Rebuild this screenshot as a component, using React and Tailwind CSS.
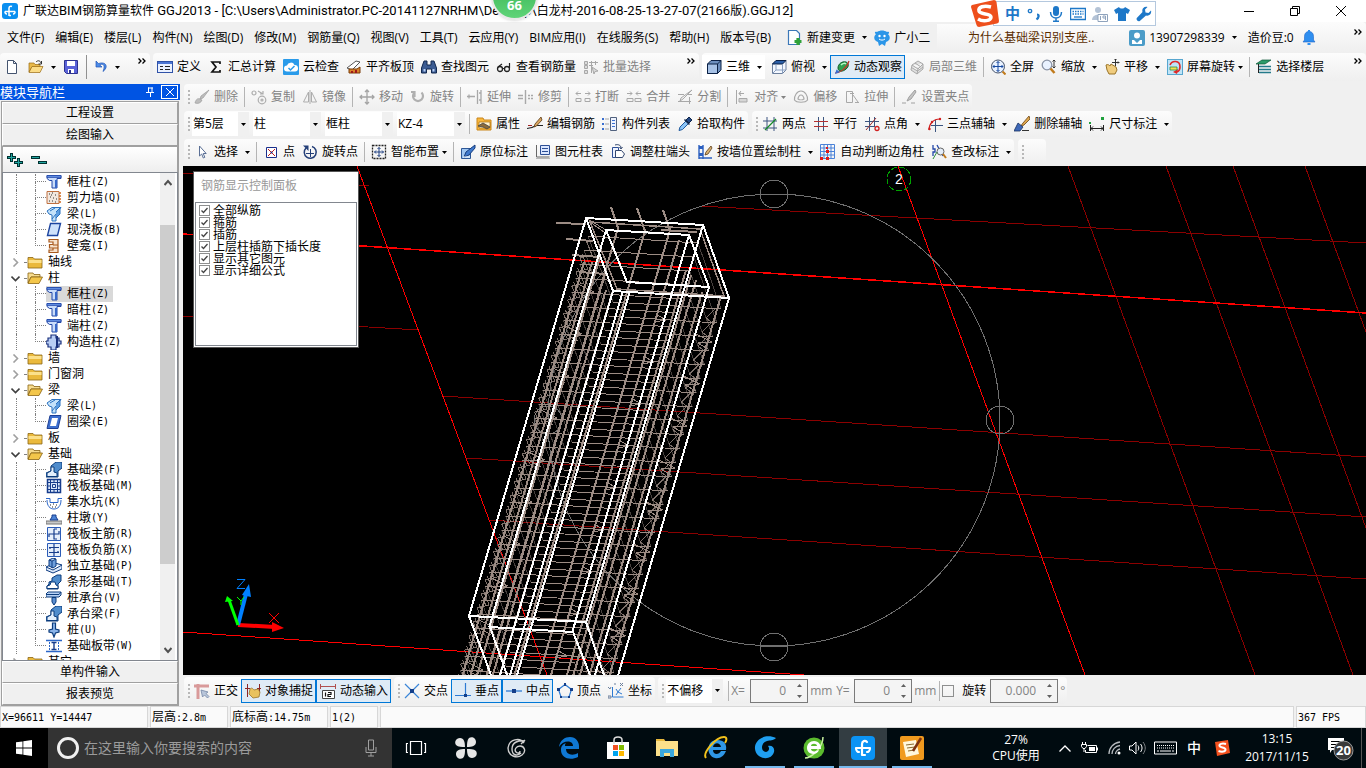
import React from 'react';

const ICONS = {
  app: (
    <>
      <rect width="16" height="16" rx="3" fill="#0a8ff0" />
      <path d="M7 13V5a2 2 0 0 1 3-1.5M3 8.500h10M3 8.500a2 2 0 0 0 2 2.500M13 8.500a2 2 0 0 1-2 2.500M7 12.500h2" stroke="#fff" strokeWidth="1.500" fill="none" />
    </>
  ),
  newFile: <path d="M3.500 1.500h6l3 3v10h-9zM9.500 1.500v3h3" fill="#fff" stroke="#44546f" />,
  open: (
    <>
      <path d="M1 13V4h5l1 1.500h5V8H4z" fill="#e8b94a" stroke="#9a6a12" strokeWidth=".7" />
      <path d="M1 13.500 4 7.500h11l-3 6z" fill="#fbdc86" stroke="#9a6a12" strokeWidth=".7" />
      <path d="M8 3c2-2 4-1.500 5 1M13.500 2v3h-3" stroke="#333" fill="none" />
    </>
  ),
  save: (
    <>
      <path d="M1.500 1.500h13v13h-11l-2-2z" fill="#5a62d8" stroke="#2c3290" />
      <path d="M4 2h8v5H4zM5 10h6v4H5z" fill="#fff" />
      <path d="M6 11h2v3H6z" fill="#2c3290" />
    </>
  ),
  undo: <path d="M2 2v6h6L5.800 6c3-2 6 0 3.200 6.500C15 8 12 2 4.500 4.500z" fill="#4c8be8" stroke="#1f55b5" strokeWidth=".7" />,
  define: (
    <>
      <rect x=".5" y="2.500" width="15" height="11" fill="#eaf1ff" stroke="#2f52a8" />
      <path d="M1 3h14v2H1z" fill="#4c76d4" />
      <path d="M3 7.500h3M3 10.500h3M8 7.500h5M8 10.500h5" stroke="#222" />
    </>
  ),
  sigma: <path d="M12 5V3H4l4 5-4 5h8v-2" fill="none" stroke="#111" strokeWidth="1.700" />,
  cloud: (
    <>
      <rect width="16" height="16" rx="1" fill="#2a9bea" />
      <path d="M4 12.500a3 3 0 0 1 0-6 4 4 0 0 1 7.500-.5A3.200 3.200 0 0 1 12 12.500z" fill="#fff" />
      <path d="m5.500 9 2 2 4-4" fill="none" stroke="#2a9bea" strokeWidth="1.500" />
    </>
  ),
  slab: (
    <>
      <path d="m1 9 9-7 4 1-8 8z" fill="#fff" stroke="#555" />
      <path d="M3 10h8l3-2v6H3z" fill="#d9822b" stroke="#7a3c08" />
      <path d="M5 12h2v2H5zM9 11h2v3H9z" fill="#a01818" />
    </>
  ),
  binoculars: (
    <>
      <path d="M3 2h3v4h4V2h3l2.500 7v5h-5v-4h-5v4h-5V9z" fill="#3b5b92" stroke="#13294f" />
      <path d="M2.500 10h2v2.500h-2zM11.500 10h2v2.500h-2z" fill="#b9d0f5" />
    </>
  ),
  glasses: (
    <>
      <circle cx="4" cy="10" r="2.500" fill="none" stroke="#222" strokeWidth="1.300" />
      <circle cx="11" cy="10" r="2.500" fill="none" stroke="#222" strokeWidth="1.300" />
      <path d="M6.500 9.500h2M2 8l4-3M13.500 9V4" stroke="#222" strokeWidth="1.200" />
    </>
  ),
  batch: <path d="M1.500 2.500h3v3h-3zM1.500 6.500h3v3h-3zM1.500 11.500h3v3h-3zM6 3.500h9M6 6.500h4M8.500 2v12M12.500 2v4M9 8l6 4-3 .5-1 2.500z" fill="#dcdcdc" stroke="#a8a8a8" />,
  cube: (
    <>
      <path d="M1.500 5 5 1.500h10V11l-3.500 3.500h-10z" fill="#6d8fbe" stroke="#0b2145" />
      <path d="M1.500 5h10v9.500h-10z" fill="#a7c2e6" stroke="#0b2145" />
      <path d="M11.500 5 15 1.500" stroke="#0b2145" />
    </>
  ),
  cubeTop: (
    <>
      <path d="M1.500 5 5 1.500h10V11l-3.500 3.500h-10z" fill="#f4f8ff" stroke="#6c7f9c" />
      <path d="M1.500 5 5 1.500h10L11.500 5z" fill="#2b5fa8" stroke="#0b2145" />
      <path d="M11.500 5v9.500M1.500 14.500 5 11h10M5 5v6" fill="none" stroke="#8aa0c0" />
    </>
  ),
  orbit: (
    <>
      <path d="M4 9c0-4 4-7 8-6 3 1 3 5 0 7-3 3-8 3-8-1z" fill="#2fa14f" stroke="#0d5a26" />
      <path d="M1 14c5 0 12-5 14-12" fill="none" stroke="#c0392b" strokeWidth="1.200" />
      <path d="M7 6c2-2 4-2 5-1" fill="none" stroke="#b8f5c4" strokeWidth="1.500" />
      <path d="m1 15 1.500-4.500L6 13z" fill="#3a6fd0" />
    </>
  ),
  partial3d: <path d="M3 6 9 2l5 3v5l-6 5-6-4zM3 6l6 4 5-5M9 10l-1 5M6 4l6 4M2.500 8.500 8.500 12l5.500-4" fill="#e0e0e0" stroke="#a8a8a8" />,
  fit: (
    <>
      <circle cx="8" cy="7.500" r="6.500" fill="#e9f2ff" stroke="#46536b" />
      <path d="M8 2.500v10M3 7.500h10M6.500 4 8 2.500 9.500 4M6.500 11 8 12.500 9.500 11M4.500 6 3 7.500 4.500 9M11.500 6 13 7.500 11.500 9" fill="none" stroke="#1749a0" />
      <path d="m12.500 12.500 3 3" stroke="#c07a1c" strokeWidth="2" />
    </>
  ),
  zoomIcon: (
    <>
      <circle cx="6" cy="6" r="4.800" fill="#e9f2ff" stroke="#8a94a6" strokeWidth="1.300" />
      <path d="m9.500 9.500 4 4.500" stroke="#c07a1c" strokeWidth="2.500" />
      <path d="M13 1v8M11.500 2.500 13 1l1.500 1.500M11.500 7.500 13 9l1.500-1.500" fill="none" stroke="#333" />
    </>
  ),
  pan: (
    <>
      <path d="M2 6c2-1 3 0 4 1l1-2 5 3 1 3-2 4H5L3 11z" fill="#f0cc7e" stroke="#9a7428" />
      <path d="M11.500 0v7M8 3.500h7M10.500 1l1-1 1 1M14 2.500l1 1-1 1" stroke="#333" fill="none" />
    </>
  ),
  screenRotate: (
    <>
      <rect x=".5" y=".5" width="15" height="15" fill="#bfe4f7" stroke="#57a6cf" />
      <path d="M3 6c2-5 10-5 10 2 0 3-1 4-3 5" fill="none" stroke="#e02828" strokeWidth="1.600" />
      <path d="m11 10-1 5-4-2z" fill="#e02828" />
      <path d="M3 8h7v3H3z" fill="#f4e04e" stroke="#2d8d47" strokeWidth=".8" />
    </>
  ),
  floors: (
    <>
      <path d="M0 5 6 1h9l-6 4z" fill="#2d9b6a" stroke="#0d5638" strokeWidth=".7" />
      <path d="M3 7.500h12M3 10.500h12M3 13.500h12" stroke="#247a8a" strokeWidth="1.500" />
      <path d="M2.500 5v9" stroke="#222" />
    </>
  ),
  brushG: <path d="m15 1-6 8-3 1 1-3zM1 14c1-4 3-5 5-4l2 1c-1 3-4 4-7 3z" fill="#bdbdbd" stroke="#9c9c9c" strokeWidth=".7" />,
  copyG: (
    <g fill="none" stroke="#adadad" strokeWidth="1.200">
      <circle cx="3" cy="4" r="2" />
      <circle cx="11" cy="11" r="3.800" />
      <circle cx="11" cy="11" r="1" />
      <path d="m7 2 5 3M12 2v3H9" />
    </g>
  ),
  mirrorG: <path d="M6.500 3v10h-5zM9.500 3v10h5zM8 1v14" fill="none" stroke="#adadad" />,
  moveG: <path d="M8 1v14M1 8h14M6 3l2-2 2 2M6 13l2 2 2-2M3 6 1 8l2 2M13 6l2 2-2 2" fill="none" stroke="#a4a4a4" strokeWidth="1.300" />,
  rotateG: <path d="M4.500 3.500a5 5 0 1 0 7 0M4.500 8V3H1" fill="none" stroke="#b0b0b0" strokeWidth="2.200" />,
  extendG: <path d="M0 7.500h8M2 5.500v4M10.500 1v14M14 1v14M12 4h2M12 11h2" fill="none" stroke="#a8a8a8" strokeWidth="1.300" />,
  trimG: <path d="M0 6.500h5M0 9.500h5M7.500 1v14M10 6.500h2M13 6.500h2M10 9.500h2M13 9.500h2" fill="none" stroke="#a8a8a8" strokeWidth="1.400" />,
  breakG: <path d="M1 4.500h5M3 2.500 1 4.500l2 2M15 4.500h-5M13 2.500l2 2-2 2M1 9.500h5v3H1zM15 9.500h-5v3h5z" fill="none" stroke="#a8a8a8" />,
  joinG: <path d="M1 4.500h5M4 2.500l2 2-2 2M15 4.500h-5M12 2.500l-2 2 2 2M1 9.500h6v3H1zM15 9.500H9v3h6z" fill="none" stroke="#a8a8a8" />,
  splitG: <path d="M1 5.500h6M1 12.500h13M12.500 8v7M15 1 6 10l-3 2 1-3zM10 5.500h5" fill="none" stroke="#a8a8a8" />,
  alignG: <path d="M2.500 1v14M5 4.500h5M5 9.500h8V13H5zM7 2 5 4.500 7 7" fill="#d6d6d6" stroke="#a8a8a8" />,
  offsetG: <path d="M1.500 11C1 7 4 2 8 2s7 5 6.500 9c-2 3-11 3-13 0zM5 10c0-2 1.500-4 3-4s3 2 3 4c-1.500 1-4.500 1-6 0z" fill="none" stroke="#a8a8a8" strokeWidth="1.200" />,
  stretchG: <path d="M2.500 2.500h6v11h-6zM9 6l5 7M11 13.500h4M6 4.500h4" fill="none" stroke="#a8a8a8" />,
  gripG: <path d="M14 1 8 8l-2 4 4-2 5-7zM1 14h4M10 14h4" fill="#c4c4c4" stroke="#a0a0a0" />,
  props: (
    <>
      <path d="M1 2h6l1 2h7v10H1z" fill="#f9b83e" stroke="#c9851a" />
      <path d="M3 6h11v6H3z" fill="#fff3d2" stroke="#a36b10" strokeWidth=".7" />
      <path d="m2 10 5-3 7 4-3 2-4-2z" fill="#8a6a3a" stroke="#444" strokeWidth=".8" />
    </>
  ),
  editBar: (
    <>
      <path d="M0 12.500c4 0 6-1 9-3h7" fill="none" stroke="#222" strokeWidth="1.200" />
      <path d="m14 1-6 7-1 3 2.500-1L15 4z" fill="#d8a560" stroke="#5a3b16" strokeWidth=".8" />
      <path d="M1 9.500h4" stroke="#a02020" />
    </>
  ),
  list: (
    <>
      <path d="M0 2h2v2H0zM0 7h2v2H0zM0 12h2v2H0z" fill="#3a6fd0" />
      <path d="M3.500 3h4M3.500 8h4M3.500 13h4" stroke="#555" strokeDasharray="1 1" />
      <path d="M8.500 1.500h6v13h-6z" fill="#eef3ff" stroke="#51617e" />
      <path d="M10 4.500h3M10 7.500h3M10 10.500h3" stroke="#3a6fd0" />
    </>
  ),
  dropper: (
    <>
      <path d="m9 4 3-3 3 3-3 3z" fill="#244a86" stroke="#10264b" />
      <path d="m9 5 2.500 2.500-6 6-3.500 1 1-3.500z" fill="#8bc4f7" stroke="#205a9e" />
      <path d="m7.500 3.500 5 5" stroke="#10264b" strokeWidth="1.500" />
    </>
  ),
  axis2: <><path d="M5 1v14M12 1v14M1 5h14M1 12h14" stroke="#3c5580" /><path d="M3 14 14 3" stroke="#168a28" strokeWidth="1.300" /></>,
  axisPar: <><path d="M5.500 1v14M10.500 1v14" stroke="#3c5580" /><path d="M1 5.500h14M1 10.500h14" stroke="#b33030" /></>,
  axisAng: <><path d="M5.500 1v14M10.500 1v10M1 5.500h14M1 10.500h10" stroke="#3c5580" /><path d="M2 14 12 2" stroke="#a03030" /><circle cx="13" cy="12.500" r="2" fill="none" stroke="#d02020" strokeWidth="1.300" /></>,
  axis3: <><path d="M8.500 4v12M4 9.500h12" stroke="#3c5580" /><path d="M2 14c0-6 4-11 11-11" fill="none" stroke="#d02020" strokeWidth="1.200" /><circle cx="2.500" cy="13" r="1.200" fill="#d02020" /><circle cx="5" cy="6" r="1.200" fill="#d02020" /><circle cx="13" cy="3" r="1.200" fill="#d02020" /></>,
  axisDel: (
    <>
      <path d="m15 0-6 7-3 4 4-2 6-6z" fill="#e0a84e" stroke="#6a4312" strokeWidth=".8" />
      <path d="m4 7 5 4-3 4H0z" fill="#3e68b8" stroke="#17305f" strokeWidth=".8" />
      <path d="M8 14.500h7" stroke="#333" />
    </>
  ),
  dim: <><path d="M1.500 9v6M14.500 9v6M2 12.500h12M4 10.500l-2 2 2 2M12 10.500l2 2-2 2" fill="none" stroke="#222" /><path d="M0 6h2v2H0zM12 1h3v3h-3z" fill="#1fa03c" /></>,
  pointer: <path d="M5.500 2v10l2.200-2 1.600 4 1.500-.7-1.600-3.800h3z" fill="#fff" stroke="#5a6f95" />,
  point: <><path d="M3.500 3.500h10v10h-10z" fill="#fff" stroke="#1a2f8c" /><path d="m5 5 7 7M12 5l-7 7" stroke="#c02020" /><circle cx="8.500" cy="8.500" r="1" fill="#1a2f8c" /></>,
  rotPoint: <><path d="M4 4a6 6 0 1 0 6-1.500" fill="none" stroke="#243f78" strokeWidth="1.500" /><path d="M1 1.500h5.500V7z" fill="#243f78" /><path d="M8.500 5v8M4 9.500h8" stroke="#243f78" /></>,
  smart: <><path d="M1.500 1.500h13v13h-13z" fill="none" stroke="#222" strokeDasharray="2 1" strokeWidth="1.300" /><path d="M8 3.500v9M3.500 8h9M6.500 5 8 3.500 9.500 5M6.500 11 8 12.500 9.500 11M5 6.500 3.500 8 5 9.500M11 6.500 12.500 8 11 9.500" stroke="#1f3f80" fill="none" /></>,
  inplace: <><path d="M1.500 4.500h9v10h-9z" fill="#9fc6f2" stroke="#2d5796" /><path d="m15 1-9 7-2 5 5-2 6-7z" fill="#3f79cd" stroke="#173d7d" /><path d="M3 13h7" stroke="#fff" /></>,
  colTable: <><path d="M1.500 1v12h13" fill="none" stroke="#666" /><path d="M5.500 1.500h9v9h-9z" fill="#dbe7ff" stroke="#2d4f96" /><path d="M7 4.500h6M7 7.500h6" stroke="#2d4f96" /><path d="M1 14.500h14" stroke="#b8b8b8" /></>,
  adjust: <><path d="M2.500 3.500h6v10h-6z" fill="#eef3ff" stroke="#2d4f96" /><path d="M5.500 6.500v7h7l2-3.500-3-3.500z" fill="#fff" stroke="#31466e" /><path d="M5 1c3-1 6 0 6 3M9.500 3l1.500 2 1.500-2" fill="none" stroke="#31466e" /></>,
  wallCol: <><path d="M2 1v14M6 1v14M2 14h13" stroke="#2b5fc0" strokeWidth="1.400" /><path d="M2 2h4v3H2zM2 9h4v3H2z" fill="#2b5fc0" /><path d="m14 2-5 6-1 3 3-1 4-6z" fill="#d9b273" stroke="#5a3b16" strokeWidth=".8" /></>,
  autoCol: <><path d="M.5.500h14v14H.5zM4 0v15M7.500 0v15M11 0v15M0 4h15M0 7.500h15M0 11h15" fill="none" stroke="#4a82d8" /><path d="M6 3h2v2H6zM6 6h3v3H6zM0 13h3v3H0zM6 13h3v3H6z" fill="#e01818" /></>,
  check: <><path d="M2 1v4h2v3H2v4M6 1 12 12" fill="none" stroke="#2447a8" strokeWidth="1.300" /><circle cx="9.500" cy="7.500" r="3.500" fill="#e4edf8" stroke="#666" /><path d="m12 10 3 4" stroke="#c07a1c" strokeWidth="2" /><path d="M2 15 6 8" stroke="#2f8f3a" /></>,
  ortho: <><path d="M0 3h15M4 1v15" stroke="#d99a9a" strokeWidth="3" /><path d="m7 7 1.500 7 2-2 3 3 1.500-1.500-3-3 2-1.500z" fill="#b9c6da" stroke="#7587a6" strokeWidth=".8" /></>,
  snap: <><path d="M2.500 1v13M14.500 1v9M0 5.500h5M12 5.500h4" stroke="#8b2727" /><path d="M5 6c2-2 3 0 4 1l4-1 2 3-1 5-6 1-4-4z" fill="#e9c25e" stroke="#9a7428" strokeWidth=".8" /></>,
  dyn: <><path d="M0 3.500h16M.5 1v5M15.500 1v5" stroke="#b05050" /><path d="M2.500 7.500h12v8h-12z" fill="#fff" stroke="#444" /><path d="M5.500 9.500v4M8 9.500h3v2H8v2h3" fill="none" stroke="#111" strokeWidth="1.200" /></>,
  cross: <><path d="m1 1 14 14M15 1 1 15" stroke="#3b86d8" strokeWidth="1.200" /><path d="M6 6h4v4H6z" fill="#143f8a" /></>,
  perp: <><path d="M0 12.500h16M10.500 0v12" stroke="#2d7ad2" strokeWidth="1.200" /><path d="M9 11h3v3H9z" fill="#143f8a" /></>,
  mid: <><path d="M0 8h16" stroke="#2d7ad2" strokeWidth="1.300" /><path d="M6 6h4v4H6z" fill="#143f8a" /></>,
  vertex: <><path d="M8 1.500 14.500 6.500 12 14H4L1.500 6.500z" fill="none" stroke="#2d7ad2" strokeWidth="1.200" /><path d="M7 0h2v3H7zM0 5h3v3H0zM13 5h3v3h-3zM3 13h2v2H3zM11 13h2v2h-2z" fill="#143f8a" /></>,
  coord: <><path d="M4.500 4v10h11M8 6l2 3 3-4M8 12l2-3 4 2" fill="none" stroke="#2d7ad2" /><path d="M0 4l2 2 1-2M0 13h3v2H0zM6 1h2M12 0l3 3M15 0l-3 3" stroke="#6b7f9c" fill="none" /></>,
  change: <><path d="M1.500.5h8l3 3v11h-11z" fill="#fff" stroke="#3c78b8" strokeWidth="1.200" /><path d="M11 8v7M7.500 11.500h7" stroke="#2fa238" strokeWidth="3.200" /></>,
  mascot: <><path d="M2 4c-2-1-1-3 1-2 3-2 7-2 10 0 2-1 3 1 1 2 3 3 2 7-2 8l-1 4-3-2-3 2-1-4C0 11-1 7 2 4z" fill="#2b96e8" /><circle cx="5.500" cy="6" r="1.200" fill="#fff" /><circle cx="10.500" cy="6" r="1.200" fill="#fff" /><path d="M5 9c2 1.500 4 1.500 6 0" fill="none" stroke="#fff" /></>,
  avatar: <><rect width="16" height="16" rx="2" fill="#4b9cc8" /><circle cx="8" cy="5.500" r="3" fill="#fff" /><path d="M3 14V10h2l3 3 3-3h2v4z" fill="#fff" /></>,
  bell: <><path d="M8 1.500c3 0 4.500 2 4.500 5V10l1.500 2H2l1.500-2V6.500c0-3 1.500-5 4.500-5z" fill="#2f8ff0" stroke="#1b63c8" strokeWidth=".6" /><path d="M6.500 13h3v2h-3zM7 0h2v2H7z" fill="#2f8ff0" /></>,
  // tree
  folder: <><path d="M1 3.500h5l1.500 1.500H15v9H1z" fill="#eab93c" stroke="#8a6414" strokeWidth=".8" /><path d="M1.500 6H14.500V9H1.500z" fill="#fbe08a" /></>,
  folderOpen: <><path d="M1 13V3h5l1 1.500h6V7H4z" fill="#f7dc8e" stroke="#8a6414" strokeWidth=".8" /><path d="M1 13.500 4 7h11.500L12 13.500z" fill="#f3c64a" stroke="#8a6414" strokeWidth=".8" /></>,
  column: <><path d="M1 1.500h14v3H11v9.500H6V6.500H3.500L1 4.500z" fill="#c9dcfa" stroke="#2146a8" /><path d="M1 1.500h14v2H1z" fill="#5f8ce0" stroke="#2146a8" strokeWidth=".7" /><path d="M9 6v8h2V6z" fill="#3767c8" /></>,
  wall: <><path d="M1 1.500h12v12H1z" fill="#f1e7de" stroke="#c07040" /><path d="M3 4h1M6 3h1M9 5h1M4 7h1M7 8h1M10 9h1M3 11h1M6 11h1M9 12h1M5 5h1" stroke="#333" /><path d="M13 3h2M13 6h2M13 9h2M13 12h2" stroke="#d06a20" strokeWidth="1.400" /></>,
  beam: <><path d="M1 5 6 1.500h9L12 5v2l-2 2v6H6V9L3 8z" fill="#c4e2fa" stroke="#2a72c0" /><path d="m10 6 4-4v6l-4 4M4 5l5-3M6 13l4-5" fill="#5d9de0" stroke="#2a72c0" /></>,
  slabI: <path d="M4.500 1.500h10l-3 12h-10z" fill="#cfe2fb" stroke="#1d45a0" strokeWidth="1.400" />,
  ring: <><path d="M4 1.500h11l-3 13H1z" fill="#3d6fcf" stroke="#1d3f94" /><path d="M6 4h6l-2 8H4z" fill="#fff" /></>,
  niche: <path d="M3 1.500h9v13H3v-2.500h4V10H3.500V6.500H7V4H3zM7 7h5M7 10h5" fill="#f7e2cc" stroke="#a8591c" strokeWidth="1.200" />,
  consCol: <><path d="M5 1h5v3h3v3h2v3h-2v3h-3v3H5v-3H2v-3H0V7h2V4h3z" fill="#b8cdf4" stroke="#19307c" strokeWidth="1.200" /><path d="M10 2h2v12h-2z" fill="#19307c" /></>,
  fBeam: <><path d="M0 15v-4l5-2V4l5-4h6v6l-4 3v6z" fill="#4f8ccc" stroke="#0c3c7c" /><path d="M5 9V5h3v5l3 1v3.500H1V11z" fill="#e3effc" stroke="#0c3c7c" /></>,
  raft: <><path d="M1.500 1.500h13v13h-13z" fill="#dbe8fb" stroke="#163c8c" strokeWidth="1.500" /><path d="M4.500 1v14M11.500 1v14M1 4.500h14M1 11.500h14M6.500 6.500h3v3h-3zM8 1v4M8 11v4M1 8h3M12 8h3" stroke="#163c8c" fill="none" /></>,
  pit: <><path d="M0 4.500h4v4h8v-4h4M1 6c0 6 3 9 7 9s7-3 7-9" fill="none" stroke="#2b66c8" /><path d="M4 11h1M7 10h1M10 11h1M6 13h1M9 13h1" stroke="#222" /></>,
  pier: <><path d="M0 11h16v3H0z" fill="#c8c8c8" stroke="#777" /><path d="m4 10 2-3V5h4v2l2 3z" fill="#4c84d8" stroke="#163c8c" /></>,
  mainBar: <><path d="M1.500 1.500h13v13h-13z" fill="#e6effc" stroke="#2b5cb8" /><path d="M8 3v10h3M3 11V8h10V5M8 3h3" fill="none" stroke="#163c8c" strokeWidth="1.200" /></>,
  negBar: <><path d="M1.500 1.500h13v13h-13z" fill="#e6effc" stroke="#2b5cb8" /><path d="M8 2v12M3 5.500h10M3 10.500h10M4 5v2M12 9v2" fill="none" stroke="#163c8c" strokeWidth="1.200" /></>,
  isoF: <><path d="M0 9 9 5l7 2v4l-9 4-7-3zM0 9l7 3 9-5" fill="#dce9fb" stroke="#0f3c80" /><path d="M3 2 7 0l3 1v7L7 10 3 8zM6 3v7M3 2l3 1 4-2" fill="#6f9fdc" stroke="#0f3c80" /></>,
  stripF: <><path d="M1 15v-3l2-2V8l3-1V4l5-3h4v6l-3 3v5z" fill="#4f8ccc" stroke="#0c3c7c" /><path d="M1 14.500V12l3-1 1-3h4l1 3 2 1v2.500z" fill="#fff" stroke="#0c3c7c" /></>,
  pileCap: <><path d="M0 4 2 2h13v3l-2 2H0zM0 4.500h13M13 4.500 15 2" fill="#b9d3f6" stroke="#0c3c7c" /><path d="M6 7.500h4V12l-2 3-2-3z" fill="#5d8fd0" stroke="#0c3c7c" /></>,
  pile: <path d="M6.500 1h3v6L13 8v2l-3.500 1L8 15l-1.500-4L3 10V8l3.500-1z" fill="#8ab4ea" stroke="#0c3c7c" strokeWidth="1.200" />,
  band: <><path d="M0 2.500h16M0 13.500h16" stroke="#2b66c8" strokeWidth="1.400" /><path d="M3.500 4v8M12.500 4v8" stroke="#2b66c8" strokeDasharray="2 1" /><path d="M8 4v8M5.500 4.500h5M5.500 11.500h5" stroke="#163c8c" strokeWidth="1.400" /></>,
};

const Icon = ({ name, className = 'h-4 w-4' }) => (
  <svg viewBox="0 0 16 16" className={`${className} shrink-0`} aria-hidden="true">
    {ICONS[name]}
  </svg>
);

const Caret = ({ className = '' }) => (
  <span className={`flex w-[11px] shrink-0 items-center justify-center ${className}`}>
    <svg viewBox="0 0 5 3" className="h-[3px] w-[5px]" aria-hidden="true">
      <path d="M0 0h5L2.500 3z" fill="currentColor" />
    </svg>
  </span>
);

// caret: "split" leaves room before the arrow, "inline" puts it against the label
const Tool = ({ icon, label, caret, active, disabled }) => {
  const tone = disabled ? 'text-[#838383]' : 'text-black';
  const frame = active ? 'border border-[#0078d7] bg-[#dfebf6] pl-[3px] pr-0.5' : caret ? 'pl-1' : 'pl-1 pr-[3px]';
  return (
    <button type="button" disabled={disabled} className={`flex h-6 shrink-0 items-center gap-1 whitespace-nowrap ${frame} ${tone}`}>
      {icon && <Icon name={icon} />}
      {label}
      {caret === 'split' && <Caret />}
      {caret === 'inline' && <Caret className="-ml-1" />}
    </button>
  );
};

const Sep = () => <span className="mr-0.5 ml-[3px] h-5 w-px shrink-0 bg-[#b4b4b4]" />;

const Grip = () => (
  <span className="ml-1 flex shrink-0 flex-col gap-0.5">
    {[0, 1, 2, 3].map((n) => (
      <span key={n} className="h-0.5 w-0.5 bg-[#b8b8b8]" />
    ))}
  </span>
);

const Band = ({ children, className = '' }) => (
  <div className={`flex h-full shrink-0 items-center rounded-sm bg-linear-to-b from-[#fcfcfc] to-[#efefef] ${className}`}>
    {children}
  </div>
);

const Tools = ({ items }) =>
  items.map((item, i) => (item === '|' ? <Sep key={i} /> : <Tool key={i} {...item} />));

const Chevrons = () => (
  <button type="button" aria-label="更多" className="h-6 shrink-0 px-1 text-black">
    <svg viewBox="0 0 8 6" className="mb-2 h-[6px] w-2" aria-hidden="true">
      <path d="m.5.500 2.500 2.500L.5 5.500M4.500.5 7 3 4.500 5.500" fill="none" stroke="currentColor" strokeWidth="1.300" />
    </svg>
  </button>
);

const Combo = ({ label, value, className }) => (
  <div className={`flex h-6 shrink-0 bg-white ${className}`}>
    <select aria-label={label} className="min-w-0 flex-1 appearance-none bg-transparent pl-px text-black outline-none">
      <option>{value}</option>
    </select>
    <Caret className="bg-[#f0f0f0] text-black" />
  </div>
);

const MENUS = ['文件(F)', '编辑(E)', '楼层(L)', '构件(N)', '绘图(D)', '修改(M)', '钢筋量(Q)', '视图(V)', '工具(T)', '云应用(Y)', 'BIM应用(I)', '在线服务(S)', '帮助(H)', '版本号(B)'];

const TOOLS_MAIN = [
  { icon: 'define', label: '定义' },
  { icon: 'sigma', label: '汇总计算' },
  { icon: 'cloud', label: '云检查' },
  { icon: 'slab', label: '平齐板顶' },
  { icon: 'binoculars', label: '查找图元' },
  { icon: 'glasses', label: '查看钢筋量' },
  { icon: 'batch', label: '批量选择', disabled: true },
];

const TOOLS_VIEW = [
  { icon: 'cubeTop', label: '俯视', caret: 'split' },
  { icon: 'orbit', label: '动态观察', active: true },
  { icon: 'partial3d', label: '局部三维', disabled: true },
  '|',
  { icon: 'fit', label: '全屏' },
  { icon: 'zoomIcon', label: '缩放', caret: 'split' },
  { icon: 'pan', label: '平移', caret: 'split' },
  { icon: 'screenRotate', label: '屏幕旋转', caret: 'inline' },
  '|',
  { icon: 'floors', label: '选择楼层' },
];

const TOOLS_EDIT = [
  { icon: 'brushG', label: '删除', disabled: true },
  '|',
  { icon: 'copyG', label: '复制', disabled: true },
  { icon: 'mirrorG', label: '镜像', disabled: true },
  '|',
  { icon: 'moveG', label: '移动', disabled: true },
  { icon: 'rotateG', label: '旋转', disabled: true },
  '|',
  { icon: 'extendG', label: '延伸', disabled: true },
  { icon: 'trimG', label: '修剪', disabled: true },
  '|',
  { icon: 'breakG', label: '打断', disabled: true },
  { icon: 'joinG', label: '合并', disabled: true },
  { icon: 'splitG', label: '分割', disabled: true },
  '|',
  { icon: 'alignG', label: '对齐', caret: 'inline', disabled: true },
  { icon: 'offsetG', label: '偏移', disabled: true },
  { icon: 'stretchG', label: '拉伸', disabled: true },
  '|',
  { icon: 'gripG', label: '设置夹点', disabled: true },
];

const TOOLS_COMP = [
  { icon: 'props', label: '属性' },
  { icon: 'editBar', label: '编辑钢筋' },
  { icon: 'list', label: '构件列表' },
  { icon: 'dropper', label: '拾取构件' },
];

const TOOLS_AXIS = [
  { icon: 'axis2', label: '两点' },
  { icon: 'axisPar', label: '平行' },
  { icon: 'axisAng', label: '点角', caret: 'split' },
  { icon: 'axis3', label: '三点辅轴', caret: 'split' },
  { icon: 'axisDel', label: '删除辅轴' },
  { icon: 'dim', label: '尺寸标注', caret: 'split' },
];

const TOOLS_DRAW = [
  { icon: 'pointer', label: '选择', caret: 'split' },
  '|',
  { icon: 'point', label: '点' },
  { icon: 'rotPoint', label: '旋转点' },
  '|',
  { icon: 'smart', label: '智能布置', caret: 'inline' },
  '|',
  { icon: 'inplace', label: '原位标注' },
  { icon: 'colTable', label: '图元柱表' },
  { icon: 'adjust', label: '调整柱端头' },
  { icon: 'wallCol', label: '按墙位置绘制柱', caret: 'split' },
  { icon: 'autoCol', label: '自动判断边角柱' },
  { icon: 'check', label: '查改标注', caret: 'split' },
];

const TREE = [
  { icon: 'column', name: '框柱', key: 'Z' },
  { icon: 'wall', name: '剪力墙', key: 'Q' },
  { icon: 'beam', name: '梁', key: 'L' },
  { icon: 'slabI', name: '现浇板', key: 'B' },
  { icon: 'niche', name: '壁龛', key: 'I', last: true },
  { folder: true, name: '轴线' },
  { folder: true, open: true, name: '柱' },
  { icon: 'column', name: '框柱', key: 'Z', selected: true },
  { icon: 'column', name: '暗柱', key: 'Z' },
  { icon: 'column', name: '端柱', key: 'Z' },
  { icon: 'consCol', name: '构造柱', key: 'Z', last: true },
  { folder: true, name: '墙' },
  { folder: true, name: '门窗洞' },
  { folder: true, open: true, name: '梁' },
  { icon: 'beam', name: '梁', key: 'L' },
  { icon: 'ring', name: '圈梁', key: 'E', last: true },
  { folder: true, name: '板' },
  { folder: true, open: true, name: '基础' },
  { icon: 'fBeam', name: '基础梁', key: 'F' },
  { icon: 'raft', name: '筏板基础', key: 'M' },
  { icon: 'pit', name: '集水坑', key: 'K' },
  { icon: 'pier', name: '柱墩', key: 'Y' },
  { icon: 'mainBar', name: '筏板主筋', key: 'R' },
  { icon: 'negBar', name: '筏板负筋', key: 'X' },
  { icon: 'isoF', name: '独立基础', key: 'P' },
  { icon: 'stripF', name: '条形基础', key: 'T' },
  { icon: 'pileCap', name: '桩承台', key: 'V' },
  { icon: 'fBeam', name: '承台梁', key: 'F' },
  { icon: 'pile', name: '桩', key: 'U' },
  { icon: 'band', name: '基础板带', key: 'W', last: true },
  { folder: true, name: '其它' },
];

const TreeRow = ({ item }) => {
  if (item.folder) {
    return (
      <li className="flex h-4 shrink-0 items-center">
        <svg viewBox="0 0 9 9" className="ml-2 h-[9px] w-[9px]" aria-hidden="true">
          <path d={item.open ? 'M.5 2.500l4 4 4-4' : 'M2.500.5l4 4-4 4'} fill="none" stroke={item.open ? '#404040' : '#a0a0a0'} strokeWidth="1.600" />
        </svg>
        <span className="mr-px ml-1 w-0.5 border-t border-dotted border-[#808080]" />
        <Icon name={item.open ? 'folderOpen' : 'folder'} />
        <span className="ml-[5px]">{item.name}</span>
      </li>
    );
  }
  return (
    <li className="flex h-4 shrink-0 items-center">
      <span className="ml-[13px] h-4 w-[19px] border-l border-dotted border-[#808080]" />
      <span className="flex h-4 w-[11px] flex-col">
        <span className="h-2 border-b border-l border-dotted border-[#808080]" />
        {!item.last && <span className="h-2 border-l border-dotted border-[#808080]" />}
      </span>
      <span className={`flex h-4 items-center pr-1 ${item.selected ? 'bg-[#d9d9d9]' : ''}`}>
        <Icon name={item.icon} />
        <span className="ml-[5px]">{item.name}</span>
        <span className="font-['DejaVu_Sans_Mono',monospace] text-[10px]">({item.key})</span>
      </span>
    </li>
  );
};

const NavButton = ({ children }) => (
  <button type="button" className="h-[22px] shrink-0 border border-t-white border-r-[#a0a0a0] border-b-[#a0a0a0] border-l-white bg-[#f0f0f0] text-center leading-5">
    {children}
  </button>
);

const Sidebar = () => (
  <aside className="mr-[3px] flex w-[180px] shrink-0 flex-col bg-[#f0f0f0]">
    <div className="flex h-4 shrink-0 items-center bg-[#0054e3] text-white">
      <h2 className="text-[13px] leading-4">模块导航栏</h2>
      <button type="button" aria-label="固定" className="ml-auto flex h-4 w-4 items-center justify-center">
        <svg viewBox="0 0 9 10" className="h-[10px] w-[9px]"><path d="M2.500.5v5M6 .5v5M2 1h5M0 5.500h8M4.500 6v4" stroke="#fff" fill="none" /></svg>
      </button>
      <button type="button" aria-label="关闭" className="mr-0.5 ml-[3px] flex h-[14px] w-[17px] items-center justify-center border border-white">
        <svg viewBox="0 0 8 8" className="h-2 w-2"><path d="m0 0 8 8M8 0 0 8" stroke="#fff" /></svg>
      </button>
    </div>
    <div className="mx-px mt-px flex min-h-0 flex-1 flex-col border border-[#a0a0a0]">
      <NavButton>工程设置</NavButton>
      <NavButton>绘图输入</NavButton>
      <div className="flex h-[26px] shrink-0 items-center gap-2 border-x border-t border-[#a0a0a0] bg-linear-to-b from-white to-[#eeeeee] pl-1">
        <button type="button" aria-label="全部展开">
          <svg viewBox="0 0 16 16" className="h-4 w-4" shapeRendering="crispEdges"><path d="M3 1h3v3h3v3H6v3H3V7H0V4h3zM10 6h3v3h3v3h-3v3h-3v-3H7V9h3z" fill="#003030" /><path d="M4 2h1v3h3v1H5v3H4V6H1V5h3zM11 7h1v3h3v1h-3v3h-1v-3H8v-1h3z" fill="#1fa5a0" /></svg>
        </button>
        <button type="button" aria-label="全部折叠">
          <svg viewBox="0 0 16 16" className="h-4 w-4" shapeRendering="crispEdges"><path d="M0 4h9v3H0zM7 9h9v3H7z" fill="#003030" /><path d="M1 5h7v1H1zM8 10h7v1H8z" fill="#1fa5a0" /></svg>
        </button>
      </div>
      <div className="flex min-h-0 flex-1 basis-0 border border-[#82878f] bg-white">
        <ul className="flex min-w-0 flex-1 flex-col overflow-hidden pt-px whitespace-nowrap">
          {TREE.map((item, i) => <TreeRow key={i} item={item} />)}
        </ul>
        <div className="mr-0.5 flex w-[15px] shrink-0 flex-col items-center bg-[#f0f0f0]">
          <svg viewBox="0 0 8 8" className="mt-1.5 h-2 w-2"><path d="m.5 6 3.500-4L7.500 6" fill="none" stroke="#505050" strokeWidth="2" /></svg>
          <span className="mt-[38px] w-full flex-1 bg-[#cdcdcd]" />
          <svg viewBox="0 0 8 8" className="mt-[82px] mb-1.5 h-2 w-2"><path d="m.5 2 3.500 4 3.500-4" fill="none" stroke="#505050" strokeWidth="2" /></svg>
        </div>
      </div>
      <NavButton>单构件输入</NavButton>
      <NavButton>报表预览</NavButton>
    </div>
  </aside>
);

// All long edges of the column run in the same direction on screen
const LEAN = -0.294;
const along = (x, y, toY) => x + (toY - y) * LEAN;

const EDGES = [[606, 230, 627], [613, 291, 690], [623, 291, 690], [630, 291, 690], [689, 235, 632], [703, 225, 622], [709, 287, 690], [729, 298, 690], [586, 218, 616]];
const BARS = [[584, 262], [592, 262], [600, 257], [605, 274], [606, 290], [613, 290], [618, 228], [645, 231], [670, 230], [679, 240], [686, 270], [691, 275], [696, 280], [702, 292], [721, 296]];
const STUBS = ['M556 223l30 1', 'M566 239l27 2', 'M572 255l28 2', 'M579 272l26 2', 'M611 207l7 21', 'M637 208l8 23', 'M663 210l7 20', 'M661 230l36 2'];
const HOOPS = Array.from({ length: 32 }, (_, i) => i * 14);

const Model = () => (
  <svg viewBox="183 166 1183 509" preserveAspectRatio="xMinYMin slice" className="h-full w-full" shapeRendering="crispEdges" fill="none" role="img" aria-label="柱三维模型">
    <g stroke="#8b0000">
      <path d="M183 173l186 13M183 316l236 14M443 396l923 61M467 458l899 59M490 520l876 59M700 206l666 37" />
      <path d="M1068 166l187 509M1166 166l187 509M1233 166l133 362M1305 166l61 166" />
    </g>
    <g stroke="#ff0000">
      <path d="M357 166l190 509M898 166l187 509M183 632l621 43" />
      <path d="M183 234l1183 79" strokeWidth="1.500" />
    </g>
    <g stroke="#707070">
      <circle cx="774" cy="420" r="226" />
      <circle cx="774" cy="194" r="14" />
      <circle cx="1000" cy="420" r="14" />
      <circle cx="774" cy="647" r="14" />
      <circle cx="548" cy="420" r="14" />
      <path d="M760 194.500h28M760 646.500h28" />
    </g>
    <g stroke="#9c8c84">
      {/* one stirrup per step: front and back bars, then the hooks at both sides */}
      {HOOPS.map((d) => (
        <g key={d} transform={`translate(${d * LEAN} ${d})`}>
          <path d="M588 236l110 7M613 302l108 7" />
          <path d="M586 240l6 15-12 3 5 12M716 308l-10 10 8 6 3-15" strokeOpacity=".8" />
          <path d="M588 236l25 66M698 243l23 66" strokeOpacity=".45" />
          {d % 42 === 14 && <path d="M582 270l16 8-14 1 10 6M700 320l16 8-14 1 10 6M660 300l10 6-12 2" />}
        </g>
      ))}
      <path d={BARS.map(([x, y]) => `M${x} ${y}L${along(x, y, 690)} 690`).join('')} strokeWidth="2" />
      <path d={STUBS.join('')} strokeWidth="2" />
      <path d="M590 222l110 7 24 67-107-7z" strokeWidth="1.500" />
      <path d="M586 218l20 12M590 222l14 10" />
    </g>
    <g stroke="#ffffff" strokeWidth="2">
      <path d="M586 218l117 7 26 73-116-7zM606 230l83 5 20 52-82-5z" />
      <path d={EDGES.map(([x, y, end]) => `M${x} ${y}L${along(x, y, end)} ${end}`).join('')} />
      <path d="M491 675l-22-59 117 6 18 53M507 675l-17-48 83 5 17 43" />
    </g>
    <circle cx="899" cy="179" r="12" stroke="#00a000" strokeDasharray="6 2" />
    <text x="899" y="184" textAnchor="middle" fill="#fff" className="font-['Liberation_Sans',sans-serif] text-[14px]">2</text>
    <g shapeRendering="auto">
      <path d="M238 625l37 2" stroke="#f00" strokeWidth="4" />
      <path d="M272 622l12 6-12 4z" fill="#f00" />
      <path d="M238 625l8-31" stroke="#0080ff" strokeWidth="4" />
      <path d="M242 595l7-11 2 13z" fill="#0080ff" />
      <path d="M238 625l-9-25" stroke="#0f0" strokeWidth="3" />
      <path d="M225 602l2-6 6 5z" fill="#0f0" />
      <path d="M269 613l10 10M279 613l-10 10" stroke="#f00" />
      <path d="M237 579.500h8l-8 9h8" stroke="#0080ff" />
      <path d="M237 597l4 4v4M241 601l3-4" stroke="#0f0" />
    </g>
  </svg>
);

const BAR_OPTIONS = ['全部纵筋', '箍筋', '插筋', '上层柱插筋下插长度', '显示其它图元', '显示详细公式'];

const RebarPanel = () => (
  <section className="absolute top-[5px] left-[10px] flex h-[177px] w-[166px] flex-col border border-[#555] bg-white">
    <h3 className="h-[30px] shrink-0 pl-[7px] leading-7 text-[#999]">钢筋显示控制面板</h3>
    <div className="mx-px mb-px flex-1 border border-[#82878f] pt-px pl-[3px] font-['Noto_Sans_CJK_SC',sans-serif]">
      {BAR_OPTIONS.map((text) => (
        <label key={text} className="flex h-3 items-center gap-[3px] leading-3 whitespace-nowrap">
          <span className="grid h-[11px] w-[11px] place-items-center">
            <input type="checkbox" defaultChecked className="h-[11px] w-[11px] appearance-none border border-[#8e8f8f] [grid-area:1/1]" />
            <svg viewBox="0 0 9 9" className="pointer-events-none h-[9px] w-[9px] [grid-area:1/1]"><path d="m1.500 4.500 2 2 4-4.500" fill="none" stroke="#444" strokeWidth="1.300" /></svg>
          </span>
          {text}
        </label>
      ))}
    </div>
  </section>
);

const Spin = ({ label, value, className }) => (
  <div className={`flex h-6 shrink-0 items-center border border-[#7a7a7a] bg-[#f4f4f4] ${className}`}>
    <input aria-label={label} defaultValue={value} className="w-0 min-w-0 flex-1 bg-transparent pr-1.5 text-right text-[#838383] outline-none" />
    <span className="flex w-[15px] flex-col items-center gap-2 text-[#606060]">
      <svg viewBox="0 0 5 3" className="h-[3px] w-[5px]"><path d="M0 3h5L2.500 0z" fill="currentColor" /></svg>
      <svg viewBox="0 0 5 3" className="h-[3px] w-[5px]"><path d="M0 0h5L2.500 3z" fill="currentColor" /></svg>
    </span>
  </div>
);

const SnapBar = () => (
  <div className="flex h-[31px] shrink-0 items-center gap-[3px] bg-[#f0f0f0] py-0.5 pl-px">
    <Band>
      <Grip />
      <Tools items={[{ icon: 'ortho', label: '正交' }, { icon: 'snap', label: '对象捕捉', active: true }, { icon: 'dyn', label: '动态输入', active: true }]} />
    </Band>
    <Band>
      <Grip />
      <Tools
        items={[
          { icon: 'cross', label: '交点' },
          { icon: 'perp', label: '垂点', active: true },
          { icon: 'mid', label: '中点', active: true },
          { icon: 'vertex', label: '顶点' },
          { icon: 'coord', label: '坐标' },
        ]}
      />
    </Band>
    <Band className="text-[#838383]">
      <Grip />
      <Combo label="偏移方式" value="不偏移" className="mx-0.5 w-[57px]" />
      <Sep />
      <span className="w-[19px]">X=</span>
      <Spin label="X" value="0" className="w-[58px]" />
      <span className="w-7 pl-0.5">mm</span>
      <span className="w-[18px]">Y=</span>
      <Spin label="Y" value="0" className="w-[58px]" />
      <span className="w-6 pl-0.5">mm</span>
      <Sep />
      <label className="mr-1 flex items-center gap-2 text-black">
        <input type="checkbox" className="h-3 w-3 appearance-none border border-[#8e8f8f]" />
        旋转
      </label>
      <Spin label="旋转角度" value="0.000" className="w-[68px]" />
      <span className="px-0.5">°</span>
    </Band>
  </div>
);

const StatusBar = () => (
  <footer className="flex h-[22px] shrink-0 gap-0.5 bg-[#f0f0f0] font-['DejaVu_Sans_Mono','Noto_Sans_CJK_SC',monospace] text-[10px] leading-[22px]">
    <span className="w-[148px] border border-[#d7d7d7] bg-[#fafafa] pl-px">X=96611 Y=14447</span>
    <span className="w-[78px] border border-[#d7d7d7] bg-[#fafafa] pl-px"><span className="text-xs leading-none">层高</span>:2.8m</span>
    <span className="w-[98px] border border-[#d7d7d7] bg-[#fafafa] pl-px"><span className="text-xs leading-none">底标高</span>:14.75m</span>
    <span className="w-12 border border-[#d7d7d7] bg-[#fafafa] pl-px">1(2)</span>
    <span className="flex-1 border border-[#d7d7d7] bg-[#fafafa]" />
    <span className="w-[70px] border border-[#d7d7d7] bg-[#fafafa] pl-px">367 FPS</span>
  </footer>
);

const TaskButton = ({ label, running, active, children }) => (
  <button type="button" aria-label={label} className={`flex h-10 w-12 shrink-0 flex-col items-center ${active ? 'bg-[#333d42]' : ''}`}>
    <svg viewBox="0 0 24 24" className="mt-2 h-6 w-6" fill="none">{children}</svg>
    {running && <span className={`mt-1.5 h-0.5 bg-[#76b9ed] ${active ? 'w-12' : 'w-10'}`} />}
  </button>
);

const Taskbar = () => (
  <div className="flex h-10 shrink-0 items-center bg-[#000b10] text-white">
    <button type="button" aria-label="开始" className="flex h-10 w-12 shrink-0 items-center justify-center bg-black">
      <svg viewBox="0 0 16 16" className="h-4 w-4"><path d="M0 2.300 6.500 1.400v6.200H0zM7.300 1.300 16 0v7.600H7.300zM0 8.400h6.500v6.200L0 13.700zM7.300 8.400H16V16l-8.700-1.300z" fill="#fff" /></svg>
    </button>
    <div className="flex h-10 w-[344px] shrink-0 items-center bg-[#333]">
      <span className="ml-[9px] h-[22px] w-[22px] rounded-full border-[3px] border-[#f0f0f0]" />
      <input aria-label="搜索" placeholder="在这里输入你要搜索的内容" className="ml-[5px] min-w-0 flex-1 bg-transparent text-sm text-white outline-none placeholder:text-[#9b9b9b]" />
      <svg viewBox="0 0 12 18" className="mr-[15px] h-[18px] w-3" fill="none" stroke="#a0a0a0"><path d="M3.500 1h5v10h-5zM1 8v5.500h10V8M6 14v3M3 17h6" /></svg>
    </div>
    <div className="flex gap-0.5">
      <TaskButton label="任务视图">
        <path d="M6.500 5.500h11v13h-11zM4 7.500H2.500v9H4M20 7.500h1.500v9H20" stroke="#fff" strokeWidth="1.200" />
      </TaskButton>
      <TaskButton label="浏览器">
        <path d="M11 11C11 6 10 2 6 2 2 2 0 6 2 9c2 2 6 2 9 2zM13 11c5 0 9-1 9-5 0-4-4-6-7-4-2 2-2 6-2 9zM13 13c0 5 1 9 5 9 4 0 6-4 4-7-2-2-6-2-9-2zM11 13c-5 0-9 1-9 5 0 4 4 6 7 4 2-2 2-6 2-9z" fill="#e6e6e6" />
      </TaskButton>
      <TaskButton label="旋风">
        <path d="M20 7C16 1 5 3 4 12c0 8 9 11 14 7 5-4 2-9-2-9s-6 4-4 6 4 1 4-1M21 5c-6-1-13 1-13 8s6 7 9 4M21 4l-4 4" stroke="#d0d0d0" strokeWidth="1.400" />
      </TaskButton>
    </div>
    <div className="ml-[5px] flex gap-px">
      <TaskButton label="Edge">
        <path d="M2 11C3 4 8 1 13 1c6 0 9 5 9 9v3H9c0 6 7 7 12 4v4c-8 4-17 1-17-7 0-4 2-6 5-7-1 1-1 2-1 3h8c0-6-10-6-14 1z" fill="#0f78d4" />
      </TaskButton>
      <TaskButton label="应用商店">
        <path d="M1 6h22v17H1z" fill="#fff" />
        <path d="M8 8V4c0-4 8-4 8 0v4" stroke="#ddd" strokeWidth="1.500" />
        <path d="M7 9h5v5H7z" fill="#f25022" /><path d="M13 9h5v5h-5z" fill="#7fba00" /><path d="M7 15h5v5H7z" fill="#00a4ef" /><path d="M13 15h5v5h-5z" fill="#ffb900" />
      </TaskButton>
      <TaskButton label="资源管理器">
        <path d="M1 3h8l2 3H1z" fill="#e9b93d" /><path d="M1 5h22v15H1z" fill="#fce08a" /><path d="M5 21v-8h14v8h-4v-4h-6v4z" fill="#3ba7dc" />
      </TaskButton>
      <TaskButton label="Internet Explorer">
        <path d="M22 15c-2 5-6 8-11 7C2 20 2 4 13 4c7 0 10 4 9 10H9c0 5 6 5 8 1zM9 11h8c-1-5-7-5-8 0z" fill="#2f97e6" fillRule="evenodd" />
        <path d="M2 22C-2 17 12 1 20 1c3 0 3 3 1 6" stroke="#f2c21c" strokeWidth="2" />
      </TaskButton>
      <TaskButton label="广联达" running>
        <path d="M23 2C12-3 1 4 2 13c1 10 16 13 19 3 1-4-2-7-6-6 2 2 1 6-2 6-5 0-6-9 1-11 3-1 6 0 9-3z" fill="#1f9ff0" />
      </TaskButton>
      <TaskButton label="360浏览器" running>
        <circle cx="12" cy="12" r="10.500" fill="#5bbb2e" /><path d="M3 22c6 0 18-10 18-21" stroke="#c6f0a0" strokeWidth="1.500" />
        <path d="M12 5c5 0 7 4 7 8H9c0 3 5 3 8 1-2 6-12 5-12-2 0-4 3-7 7-7zM9 10h6c0-3-6-3-6 0z" fill="#fff" fillRule="evenodd" />
      </TaskButton>
      <TaskButton label="广联达BIM" running active>
        <rect width="24" height="24" rx="4" fill="#0b93f4" />
        <path d="M11 19V8c0-3 3-4 5-2M5 12h14M5 12c0 3 2 4 3 4M19 12c0 3-2 4-3 4M11 19h3" stroke="#fff" strokeWidth="2.200" strokeLinecap="round" />
      </TaskButton>
      <TaskButton label="便签" running>
        <rect width="24" height="24" rx="2" fill="#f09a1e" /><path d="m3 6 13-2 3 14-13 3z" fill="#fff7dc" /><path d="M6 9l8-1M7 12l8-1M8 15l6-1" stroke="#8a6a30" /><path d="m21 2-8 13" stroke="#7c3210" strokeWidth="2.500" />
      </TaskButton>
    </div>
    <div className="ml-auto flex h-10 items-center text-xs leading-4">
      <div className="w-[50px] text-center">27%<br />CPU使用</div>
      <svg viewBox="0 0 12 7" className="ml-[18px] h-[7px] w-3" fill="none"><path d="m.5 6.500 5.500-5.500 5.500 5.500" stroke="#fff" strokeWidth="1.300" /></svg>
      <svg viewBox="0 0 18 12" className="ml-[10px] h-3 w-[18px]" fill="none"><path d="M6.500 3.500h9v7H4.500V8M16.500 5.500v3M1.500 0v2M4.500 0v2M.5 2.500h5v2l-1.500 2H2l-1.500-2zM3 6v4" stroke="#fff" /><path d="M8 5h6v4H8z" fill="#fff" /></svg>
      <svg viewBox="0 0 14 14" className="ml-2 h-[14px] w-[14px]" fill="none"><path d="M2 13C2 7 6 2 13 1M5 13c0-4 3-8 8-8.500M8.500 13c0-2 2-4.500 4.500-5" stroke="#b8bcc0" strokeWidth="1.300" /><circle cx="12" cy="12" r="1.500" fill="#fff" /></svg>
      <svg viewBox="0 0 17 14" className="ml-2 h-[14px] w-[17px]" fill="none"><path d="M.5 5h2.500l4-4v12l-4-4H.5zM9 4.500c1 1.500 1 3.500 0 5M11.500 3c2 2.500 2 5.500 0 8" stroke="#fff" /><path d="M14 1c3 4 3 8 0 12" stroke="#7c8083" /></svg>
      <svg viewBox="0 0 23 14" className="ml-2 h-[14px] w-[23px]" fill="none"><path d="M.5 1h22v12H.5z" stroke="#fff" /><path d="M3 4.500h17M3 7h17" stroke="#fff" strokeDasharray="1 1" /><path d="M3 10h2M6 10h11M18 10h2" stroke="#fff" /></svg>
      <span className="ml-[9px] w-4 text-center text-sm font-medium">中</span>
      <svg viewBox="0 0 16 16" className="ml-3 h-4 w-4" fill="none"><path d="m1 2 13-2 2 13-13 3z" fill="#f4511e" /><path d="M12 4C8 3 5 4 5.500 6s6 1 6 3.500-4 2.500-7 1.500" stroke="#fff" strokeWidth="2" /></svg>
      <div className="ml-3 w-[70px] text-center leading-[18px]">13:15<br />2017/11/15</div>
      <div className="ml-4 flex w-[32px] items-center">
        <svg viewBox="0 0 26 26" className="h-[26px] w-[26px]" fill="none">
          <path d="M0 3h16v12H4l-2 3v-3H0z" fill="#fff" /><path d="M3 6.500h10M3 9.500h10M3 12.500h4" stroke="#000" />
          <circle cx="15.500" cy="15.500" r="9.500" fill="#3a3a3a" stroke="#999" />
          <text x="15.500" y="20" textAnchor="middle" fill="#fff" className="text-[13px] font-bold">20</text>
        </svg>
      </div>
      <span className="mr-1 ml-px h-10 w-px bg-[#555]" />
    </div>
  </div>
);

const ImeBar = () => (
  <div className="absolute top-0 left-[971px] flex h-[27px] items-center">
    <svg viewBox="0 0 28 28" className="z-10 h-7 w-7" fill="none">
      <path d="M1 5 23 0q2 0 2.500 2L28 21q0 2-2 2.500L8 27q-2 0-2.500-2L0 7q0-1.500 1-2z" fill="#ee4f1c" />
      <path d="M20 7C13 5 7 7 8 11s12 2 12 6-8 5-13 2" stroke="#fff" strokeWidth="3.500" />
    </svg>
    <div className="-ml-1.5 flex h-[25px] items-center gap-1.5 border border-[#b4c8de] bg-white pr-[3px] pl-[11px] text-[#1e78c8]">
      <span className="text-[15px] leading-none font-bold">中</span>
      <svg viewBox="0 0 16 16" className="h-4 w-4" fill="none"><circle cx="4" cy="5" r="1.700" stroke="currentColor" strokeWidth="1.300" /><path d="M11 8.500c2.500 0 2 3-.5 5" stroke="currentColor" strokeWidth="2.200" /></svg>
      <svg viewBox="0 0 16 16" className="h-4 w-4" fill="none"><rect x="5" y="0" width="6" height="10" rx="3" fill="currentColor" /><path d="M2.500 6c0 8 11 8 11 0M8 12v3M5 15.200h6" stroke="currentColor" strokeWidth="1.500" /></svg>
      <svg viewBox="0 0 16 16" className="h-4 w-4" fill="none"><path d="M.5 2.500h15v11H.5z" stroke="currentColor" strokeWidth="1.400" /><path d="M2.500 5.500h11M2.500 8h11" stroke="currentColor" strokeDasharray="1.500 1" strokeWidth="1.300" /><path d="M4 11h8" stroke="currentColor" strokeWidth="1.300" /></svg>
      <svg viewBox="0 0 16 16" className="h-4 w-4" fill="none"><circle cx="6" cy="4" r="3" fill="#b4c3d6" /><path d="M0 14c0-7 12-7 12 0z" fill="#b4c3d6" /><path d="M6 8.500h9.500v7H6z" fill="#fff" stroke="#8fa3bd" /><path d="M8.500 10v4M11 10h2.500v4M11 10v2h2.500" stroke="#8fa3bd" /></svg>
      <svg viewBox="0 0 16 16" className="h-4 w-4"><path d="M5 1 0 4l2 4 2-1v8h8V7l2 1 2-4-5-3c-1 2-5 2-6 0z" fill="currentColor" /></svg>
      <svg viewBox="0 0 16 16" className="h-4 w-4"><path d="M15 4.500 12.500 7 9.500 6.500 9 3.500 11.500 1C8 0 5.500 3 6.500 6L.8 12c-1 2 1.200 4 3 3L10 9.500c3 1 6-1.500 5-5z" fill="currentColor" /></svg>
    </div>
  </div>
);

const Latin = ({ children }) => <span className="font-['Roboto',sans-serif] text-[13px] leading-none">{children}</span>;

const TitleBar = () => (
  <header className="relative flex h-[22px] shrink-0 items-center bg-white pr-0.5">
    <Icon name="app" className="ml-0.5 h-4 w-4" />
    <h1 className="ml-[5px] flex-1 truncate">
      广联达<Latin>BIM</Latin>钢筋算量软件<Latin>{' GGJ2013 - [C:\\Users\\Administrator.PC-20141127NRHM\\Desktop\\'}</Latin>白龙村<Latin>-2016-08-25-13-27-07(2166</Latin>版<Latin>).GGJ12]</Latin>
    </h1>
    <button type="button" aria-label="最小化" className="flex h-5 w-[46px] items-center justify-center"><svg viewBox="0 0 10 10" className="h-[10px] w-[10px]"><path d="M0 5.500h10" stroke="#000" /></svg></button>
    <button type="button" aria-label="还原" className="flex h-5 w-[46px] items-center justify-center"><svg viewBox="0 0 10 10" className="h-[10px] w-[10px]"><path d="M.5 2.500h7v7h-7zM2.500 2V.5h7v7H8" fill="none" stroke="#000" /></svg></button>
    <button type="button" aria-label="关闭" className="flex h-5 w-[46px] items-center justify-center"><svg viewBox="0 0 10 10" className="h-[10px] w-[10px]"><path d="m0 0 10 10M10 0 0 10" stroke="#000" /></svg></button>
    <div className="absolute -top-[27px] left-[491px] flex h-[47px] w-[47px] items-end justify-center rounded-full border-2 border-[#e8e8e8] bg-linear-to-b from-[#2fae4e] to-[#5fd478] pb-1.5 text-[13px] leading-none font-bold text-white shadow">66</div>
    <ImeBar />
  </header>
);

const App = () => (
  <div className="flex h-screen min-h-[600px] flex-col overflow-hidden bg-[#f0f0f0] font-['Open_Sans','Noto_Sans_CJK_SC',sans-serif] text-xs text-black">
    <TitleBar />

    <nav className="flex h-[31px] shrink-0 items-center">
      <div className="flex items-center gap-[11px] pl-[7px] whitespace-nowrap">
        {MENUS.map((m) => <button type="button" key={m}>{m}</button>)}
      </div>
      <div className="ml-3 flex items-center">
        <Tool icon="change" label="新建变更" caret="split" />
        <Tool icon="mascot" label="广小二" />
      </div>
      <a href="#faq" className="ml-1 flex h-7 w-[188px] shrink-0 items-center justify-center bg-linear-to-b from-[#fcfcfc] to-[#efefef] text-[#5a2d00]">为什么基础梁识别支座..</a>
      <Band className="flex-1">
        <Tool icon="avatar" label="13907298339" caret="split" />
        <span className="w-1" />
        <Tool label="造价豆:0" />
        <Tool icon="bell" />
        <span className="ml-auto"><Chevrons /></span>
      </Band>
    </nav>

    <div className="mb-[3px] flex h-7 shrink-0 items-center gap-[3px]">
      <Band className="w-[150px] pl-1">
        <Icon name="newFile" />
        <Icon name="open" className="ml-2 h-4 w-4" />
        <Caret className="ml-1" />
        <Icon name="save" className="ml-1 h-4 w-4" />
        <span className="mx-[7px] h-6 w-px bg-[#909090]" />
        <Icon name="undo" />
        <Caret className="ml-0.5" />
        <span className="ml-auto"><Chevrons /></span>
      </Band>
      <Band className="w-[546px]">
        <Tools items={TOOLS_MAIN} />
        <span className="ml-auto"><Chevrons /></span>
      </Band>
      <Band className="min-w-0 flex-1">
        <span className="mr-0.5 flex bg-white"><Tool icon="cube" label="三维" caret="split" /></span>
        <Tools items={TOOLS_VIEW} />
        <span className="ml-auto"><Chevrons /></span>
      </Band>
    </div>

    <main className="flex min-h-0 flex-1">
      <Sidebar />
      <div className="flex min-w-0 flex-1 flex-col">
        <div className="flex h-[26px] shrink-0 pl-px">
          <Band><Grip /><Tools items={TOOLS_EDIT} /></Band>
        </div>
        <div className="flex h-7 shrink-0 gap-1 py-px pl-px">
          <Band>
            <Grip />
            <div className="mr-px ml-0.5 flex gap-1">
              <Combo label="楼层" value="第5层" className="w-[57px]" />
              <Combo label="构件类型" value="柱" className="w-[68px]" />
              <Combo label="构件种类" value="框柱" className="w-[68px]" />
              <Combo label="构件名称" value="KZ-4" className="w-[68px]" />
            </div>
            <Sep />
            <Tools items={TOOLS_COMP} />
          </Band>
          <Band><Grip /><Tools items={TOOLS_AXIS} /></Band>
        </div>
        <div className="flex h-7 shrink-0 gap-1 py-px pl-px">
          <Band><Grip /><Tools items={TOOLS_DRAW} /></Band>
          <Band className="w-7"><Grip /></Band>
        </div>
        <div className="relative min-h-0 flex-1 basis-0 overflow-hidden bg-black">
          <Model />
          <RebarPanel />
        </div>
        <SnapBar />
      </div>
    </main>

    <StatusBar />
    <Taskbar />
  </div>
);

export default App;
